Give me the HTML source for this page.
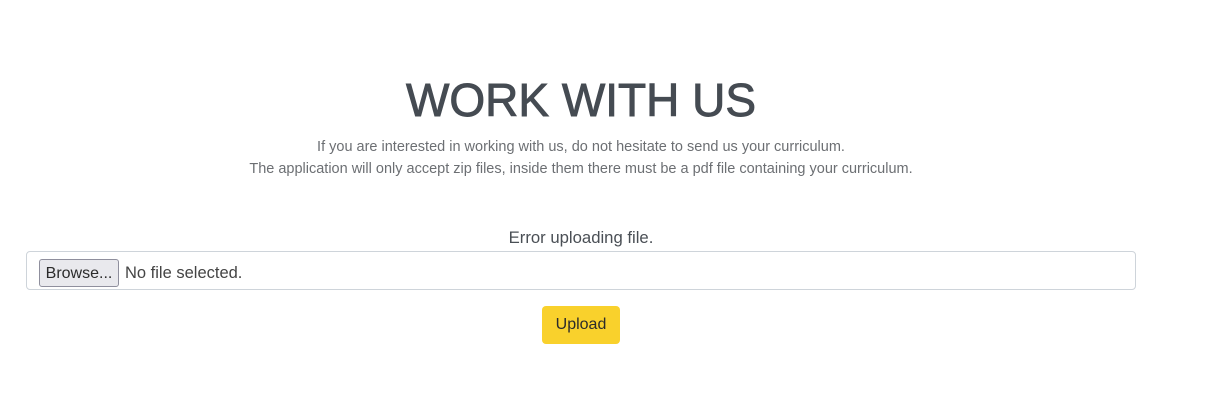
<!DOCTYPE html>
<html><head><meta charset="utf-8"><style>
body{margin:0;width:1206px;height:410px;background:#fff;font-family:"Liberation Sans",sans-serif;position:relative;overflow:hidden}
.c{position:absolute;left:0;width:1162px;text-align:center;white-space:nowrap}
h1{position:absolute;left:0;width:1162px;text-align:center;margin:0;top:70px;font-size:46px;font-weight:normal;color:#454b52;line-height:60px;-webkit-text-stroke:0.9px #454b52}
.p{font-size:14.5px;color:#6c6f73;line-height:22px}
.inp{position:absolute;left:26px;top:251px;width:1108px;height:37px;border:1px solid #ced4da;border-radius:4px}
.br{position:absolute;left:12px;top:7px;width:80px;height:28px;box-sizing:border-box;border:1px solid #8f8f9d;border-radius:3px;background:#e9e9ed;font-size:16px;color:#2b2b2b;line-height:28px;text-align:center}
.nf{position:absolute;left:98px;top:7px;font-size:16.5px;color:#444;line-height:28px}
.up{position:absolute;left:542px;top:306px;width:78px;height:38px;background:#f9d12c;border-radius:4px;font-size:16px;color:#2b2b2b;line-height:38px;text-align:center}
</style></head><body>
<h1>WORK WITH US</h1>
<div class="c p" style="top:136px">If you are interested in working with us, do not hesitate to send us your curriculum.</div>
<div class="c p" style="top:158px">The application will only accept zip files, inside them there must be a pdf file containing your curriculum.</div>
<div class="c" style="top:228px;font-size:16.7px;color:#4a4f55;line-height:20px">Error uploading file.</div>
<div class="inp"><div class="br">Browse...</div><div class="nf">No file selected.</div></div>
<div class="up">Upload</div>
</body></html>
